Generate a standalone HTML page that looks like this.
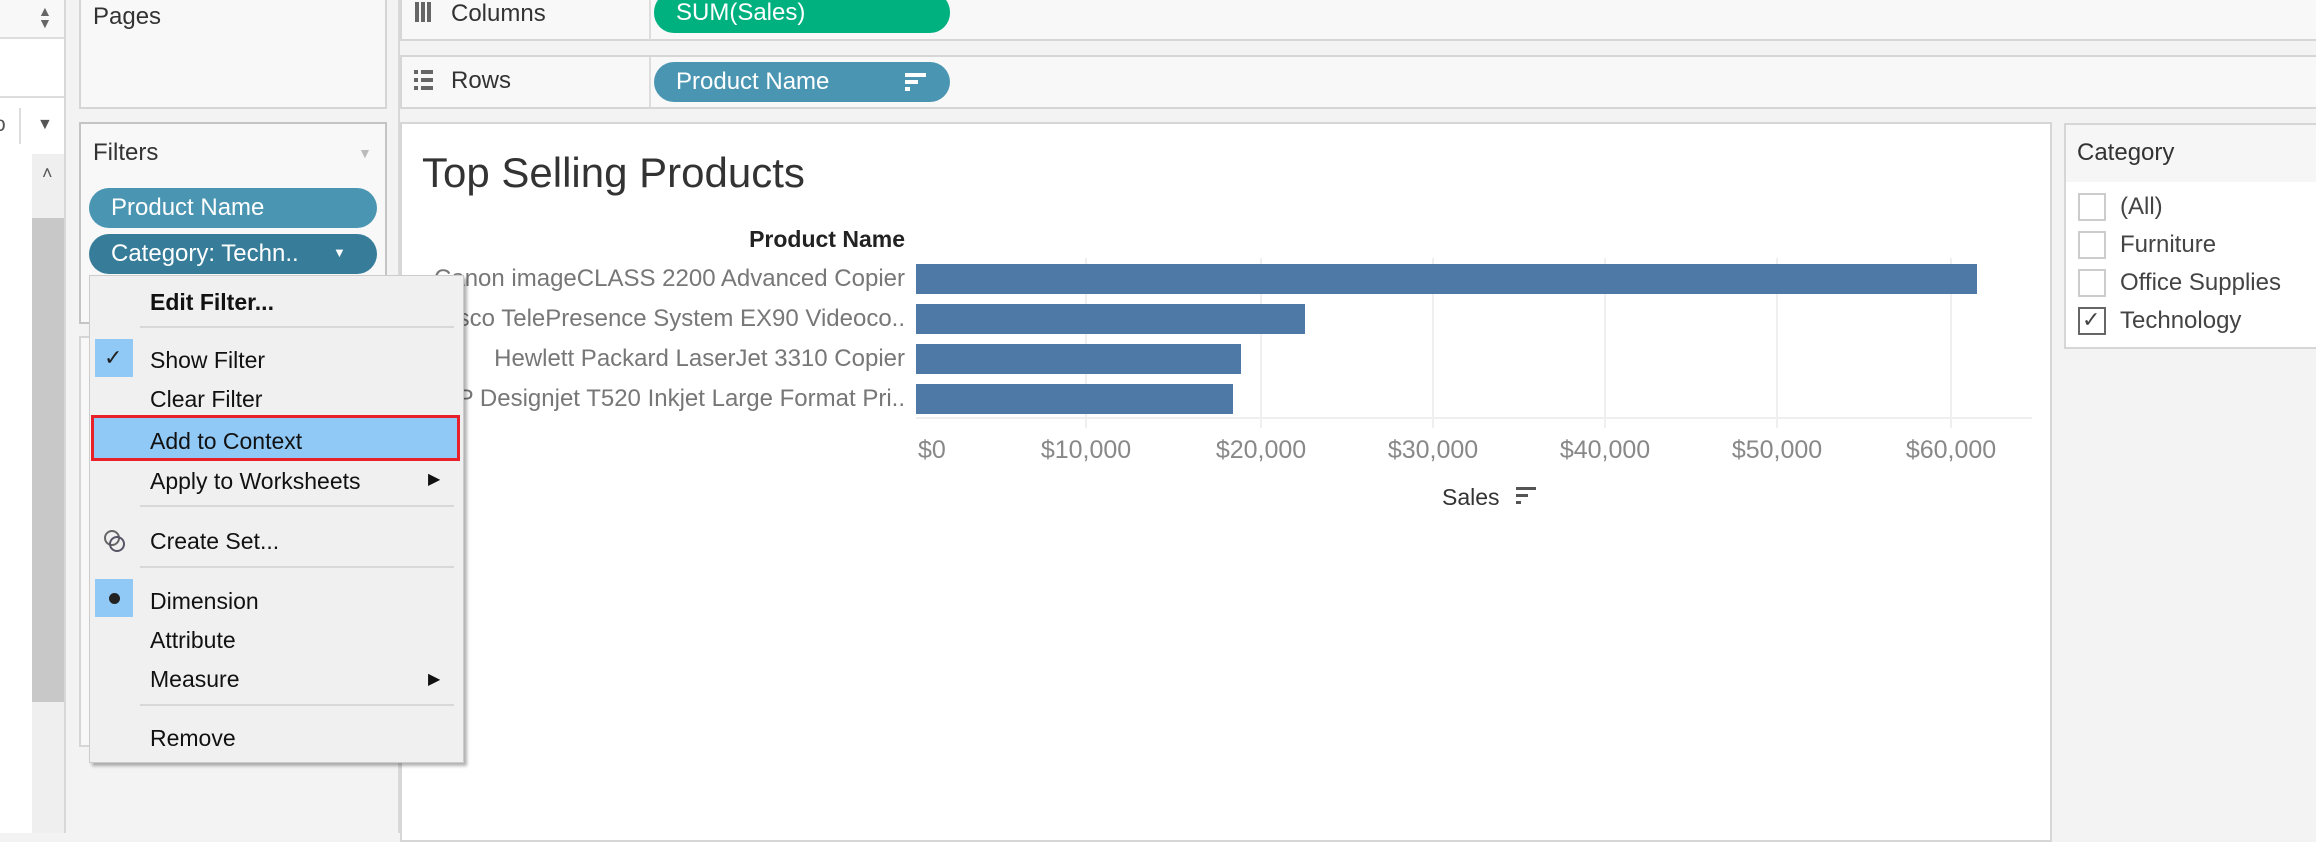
<!DOCTYPE html>
<html><head><meta charset="utf-8"><style>
*{margin:0;padding:0;box-sizing:border-box}
body{width:2316px;height:833px;overflow:hidden;background:#f3f3f3;font-family:"Liberation Sans",sans-serif;position:relative;color:#333}
.a{position:absolute}
.t{position:absolute;white-space:nowrap;line-height:1}
.pill{position:absolute;border-radius:20px;color:#fff;font-size:24px;padding-left:22px;display:flex;align-items:center}
.mi{position:absolute;left:150px;font-size:23px;color:#111;line-height:1;white-space:nowrap}
.sep{position:absolute;left:140px;width:314px;height:2px;background:#d8d8d8}
.lbl{position:absolute;right:1411px;font-size:24px;color:#777;white-space:nowrap;line-height:1}
.tick{position:absolute;top:438px;font-size:25px;color:#888;width:140px;text-align:center;line-height:1}
.gl{position:absolute;top:258px;height:170px;width:2px;background:#efefef}
.bar{position:absolute;left:916px;height:30px;background:#4e79a7}
.cb{position:absolute;left:2078px;width:28px;height:28px;border:2px solid #ccc;background:#fff}
.cl{position:absolute;left:2120px;font-size:24px;color:#444;line-height:1}
</style></head><body>
<!-- left strip -->
<div class="a" style="left:0;top:0;width:64px;height:833px;background:#fff"></div>
<div class="a" style="left:0;top:0;width:64px;height:39px;background:#f8f8f8;border-bottom:2px solid #ddd"></div>
<div class="t" style="left:38px;top:4px;font-size:14px;color:#666">▲</div>
<div class="t" style="left:38px;top:16px;font-size:14px;color:#666">▼</div>
<div class="a" style="left:0;top:96px;width:64px;height:2px;background:#ddd"></div>
<div class="t" style="left:-6px;top:114px;font-size:21px;color:#555">o</div>
<div class="a" style="left:19px;top:108px;width:2px;height:36px;background:#ddd"></div>
<div class="t" style="left:37px;top:117px;font-size:16px;color:#555">▼</div>
<div class="a" style="left:32px;top:154px;width:32px;height:679px;background:#efefef"></div>
<div class="a" style="left:32px;top:218px;width:32px;height:484px;background:#c8c8c8"></div>
<div class="t" style="left:42px;top:164px;font-size:18px;color:#555">˄</div>
<div class="a" style="left:64px;top:0;width:2px;height:833px;background:#d8d8d8"></div>
<!-- pages -->
<div class="a" style="left:79px;top:-2px;width:308px;height:111px;background:#f8f8f8;border:2px solid #d6d6d6"></div>
<div class="t" style="left:93px;top:5px;font-size:24px;color:#333">Pages</div>
<!-- filters -->
<div class="a" style="left:79px;top:122px;width:308px;height:202px;background:#f8f8f8;border:2px solid #c4c4c4"></div>
<div class="t" style="left:93px;top:141px;font-size:24px;color:#333">Filters</div>
<div class="t" style="left:358px;top:146px;font-size:14px;color:#bbb">▼</div>
<div class="pill" style="left:89px;top:188px;width:288px;height:40px;background:#4a96b2">Product Name</div>
<div class="pill" style="left:89px;top:234px;width:288px;height:40px;background:#377d9a">Category: Techn..<span style="position:absolute;left:244px;top:11px;font-size:13px">▼</span></div>
<!-- marks panel -->
<div class="a" style="left:79px;top:336px;width:308px;height:411px;background:#f8f8f8;border:2px solid #d6d6d6"></div>
<div class="a" style="left:398px;top:0;width:2px;height:833px;background:#d8d8d8"></div>
<!-- columns -->
<div class="a" style="left:400px;top:-2px;width:1920px;height:43px;background:#f8f8f8;border:2px solid #d6d6d6"></div>
<div class="a" style="left:649px;top:0;width:2px;height:40px;background:#ddd"></div>
<div class="a" style="left:415px;top:2px;width:4px;height:20px;background:#666"></div>
<div class="a" style="left:421px;top:2px;width:4px;height:20px;background:#666"></div>
<div class="a" style="left:427px;top:2px;width:4px;height:20px;background:#666"></div>
<div class="t" style="left:451px;top:2px;font-size:24px;color:#333">Columns</div>
<div class="pill" style="left:654px;top:-8px;width:296px;height:41px;background:#00b180">SUM(Sales)</div>
<!-- rows -->
<div class="a" style="left:400px;top:55px;width:1920px;height:54px;background:#f8f8f8;border:2px solid #d6d6d6"></div>
<div class="a" style="left:649px;top:57px;width:2px;height:50px;background:#ddd"></div>
<div class="a" style="left:414px;top:70px;width:4px;height:4px;background:#666"></div><div class="a" style="left:421px;top:70px;width:12px;height:4px;background:#666"></div>
<div class="a" style="left:414px;top:78px;width:4px;height:4px;background:#666"></div><div class="a" style="left:421px;top:78px;width:12px;height:4px;background:#666"></div>
<div class="a" style="left:414px;top:86px;width:4px;height:4px;background:#666"></div><div class="a" style="left:421px;top:86px;width:12px;height:4px;background:#666"></div>
<div class="t" style="left:451px;top:69px;font-size:24px;color:#333">Rows</div>
<div class="pill" style="left:654px;top:62px;width:296px;height:40px;background:#4a96b2">Product Name
<span style="position:absolute;left:251px;top:11px;width:21px;height:4px;background:#fff"></span>
<span style="position:absolute;left:251px;top:18px;width:13px;height:4px;background:#fff"></span>
<span style="position:absolute;left:251px;top:25px;width:5px;height:4px;background:#fff"></span></div>
<!-- view -->
<div class="a" style="left:400px;top:122px;width:1652px;height:720px;background:#fff;border:2px solid #d6d6d6"></div>
<div class="t" style="left:422px;top:152px;font-size:42px;color:#333">Top Selling Products</div>
<div class="t" style="right:1411px;top:228px;font-size:23px;color:#222;font-weight:bold">Product Name</div>
<div class="lbl" style="top:267px">Canon imageCLASS 2200 Advanced Copier</div>
<div class="lbl" style="top:307px">Cisco TelePresence System EX90 Videoco..</div>
<div class="lbl" style="top:347px">Hewlett Packard LaserJet 3310 Copier</div>
<div class="lbl" style="top:387px">HP Designjet T520 Inkjet Large Format Pri..</div>
<div class="gl" style="left:1085px"></div><div class="gl" style="left:1260px"></div><div class="gl" style="left:1432px"></div><div class="gl" style="left:1604px"></div><div class="gl" style="left:1776px"></div><div class="gl" style="left:1950px"></div>
<div class="a" style="left:906px;top:258px;width:10px;height:170px;background:#fff"></div>
<div class="bar" style="top:264px;width:1061px"></div>
<div class="bar" style="top:304px;width:389px"></div>
<div class="bar" style="top:344px;width:325px"></div>
<div class="bar" style="top:384px;width:317px"></div>
<div class="a" style="left:916px;top:417px;width:1116px;height:2px;background:#eee"></div>
<div class="t" style="left:918px;top:438px;font-size:25px;color:#888">$0</div>
<div class="tick" style="left:1016px">$10,000</div><div class="tick" style="left:1191px">$20,000</div><div class="tick" style="left:1363px">$30,000</div><div class="tick" style="left:1535px">$40,000</div><div class="tick" style="left:1707px">$50,000</div><div class="tick" style="left:1881px">$60,000</div>
<div class="t" style="left:1442px;top:486px;font-size:23px;color:#333">Sales</div>
<div class="a" style="left:1516px;top:487px;width:20px;height:3px;background:#555"></div>
<div class="a" style="left:1516px;top:494px;width:12px;height:3px;background:#555"></div>
<div class="a" style="left:1516px;top:501px;width:5px;height:3px;background:#555"></div>
<!-- category card -->
<div class="a" style="left:2064px;top:123px;width:260px;height:226px;background:#fff;border:2px solid #d6d6d6"></div>
<div class="a" style="left:2066px;top:125px;width:260px;height:57px;background:#f6f6f6"></div>
<div class="t" style="left:2077px;top:141px;font-size:24px;color:#333">Category</div>
<div class="cb" style="top:193px"></div><div class="cl" style="top:195px">(All)</div>
<div class="cb" style="top:231px"></div><div class="cl" style="top:233px">Furniture</div>
<div class="cb" style="top:269px"></div><div class="cl" style="top:271px">Office Supplies</div>
<div class="cb" style="top:307px;border-color:#666"></div><div class="t" style="left:2082px;top:309px;font-size:22px;color:#444">✓</div><div class="cl" style="top:309px">Technology</div>
<!-- context menu -->
<div class="a" style="left:89px;top:275px;width:375px;height:488px;background:#f0f0f0;border:1px solid #ccc;box-shadow:3px 3px 3px rgba(0,0,0,.3)"></div>
<div class="mi" style="top:291px;font-weight:bold">Edit Filter...</div>
<div class="sep" style="top:326px"></div>
<div class="a" style="left:95px;top:339px;width:38px;height:38px;background:#90c8f6"></div>
<div class="t" style="left:104px;top:347px;font-size:22px;color:#222">✓</div>
<div class="mi" style="top:349px">Show Filter</div>
<div class="mi" style="top:388px">Clear Filter</div>
<div class="a" style="left:91px;top:415px;width:369px;height:46px;background:#90c8f6;border:3px solid #e8202a"></div>
<div class="mi" style="top:430px">Add to Context</div>
<div class="mi" style="top:470px">Apply to Worksheets</div>
<div class="t" style="left:428px;top:472px;font-size:16px;color:#111">▶</div>
<div class="sep" style="top:505px"></div>
<svg class="a" style="left:103px;top:528px" width="24" height="28"><circle cx="9" cy="10" r="7" fill="none" stroke="#666" stroke-width="2"/><circle cx="14" cy="16" r="7" fill="none" stroke="#556" stroke-width="2"/></svg>
<div class="mi" style="top:530px">Create Set...</div>
<div class="sep" style="top:566px"></div>
<div class="a" style="left:95px;top:579px;width:38px;height:38px;background:#90c8f6"></div>
<div class="a" style="left:109px;top:593px;width:11px;height:11px;border-radius:50%;background:#222"></div>
<div class="mi" style="top:590px">Dimension</div>
<div class="mi" style="top:629px">Attribute</div>
<div class="mi" style="top:668px">Measure</div>
<div class="t" style="left:428px;top:672px;font-size:16px;color:#111">▶</div>
<div class="sep" style="top:704px"></div>
<div class="mi" style="top:727px">Remove</div>
</body></html>
